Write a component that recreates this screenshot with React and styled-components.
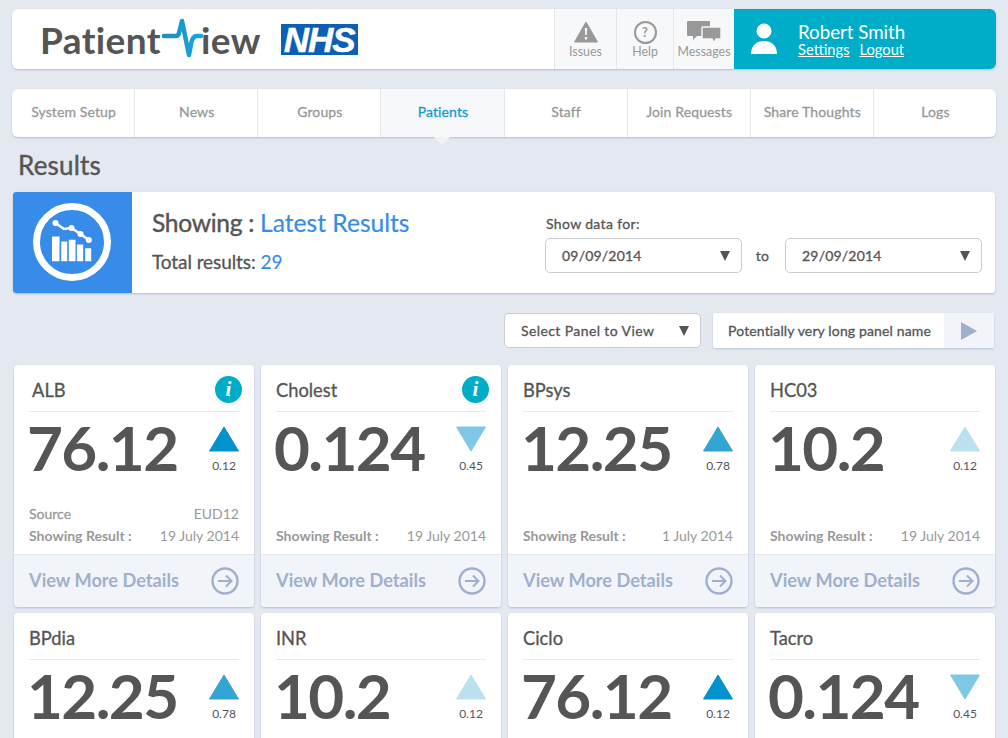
import styled, { createGlobalStyle, css } from "styled-components";

const GlobalStyle = createGlobalStyle`
  html, body {
    margin: 0;
    height: 738px;
    overflow: hidden;
    background: #e4e9f1;
  }
  * { box-sizing: border-box; }
`;

// Lato only comes in regular and bold here, the design uses a medium cut
const medium = css`
  font-weight: 400;
  -webkit-text-stroke: 0.3px currentColor;
`;

const Page = styled.div`
  height: 738px;
  overflow: hidden;
  padding: 9px 12px 0;
  font-family: Lato, "Open Sans", sans-serif;
  color: #555;
`;

const Header = styled.header`
  display: flex;
  height: 60px;
  background: #fff;
  border-radius: 6px;
  box-shadow: 0 1px 2px rgba(120, 140, 170, 0.45);
`;

const Brand = styled.div`
  flex: 1;
  display: flex;
  align-items: center;
  padding-left: 28px;
`;

const Wordmark = styled.div`
  display: flex;
  align-items: center;
  font-size: 37px;
  font-weight: 700;
  letter-spacing: 0.4px;
  color: #555;
`;

const Pulse = styled.svg`
  width: 41px;
  height: 42px;
  margin: 0 -2px 0 1px;
`;

const NhsBadge = styled.div`
  width: 77px;
  height: 31px;
  margin-left: 20px;
  background: #0b5fb4;
  color: #fff;
  font: italic 700 35px/31px "Liberation Sans", sans-serif;
  letter-spacing: -1px;
  -webkit-text-stroke: 0.5px #fff;
  text-align: center;
`;

const IconTab = styled.div`
  width: ${(props) => props.$width}px;
  display: flex;
  flex-direction: column;
  align-items: center;
  justify-content: flex-start;
  padding-top: 11px;
  background: #f7f8f9;
  border-left: 1px solid #e3e6ea;
  font-size: 12.4px;
  line-height: 15px;
  color: #999;
`;

const IconSlot = styled.div`
  height: 24px;
  display: flex;
  align-items: center;
  justify-content: center;
`;

const HelpCircle = styled.div`
  width: 23px;
  height: 23px;
  border: 2px solid #999;
  border-radius: 50%;
  text-align: center;
  font-size: 13px;
  font-weight: 700;
  line-height: 19px;
  color: #999;
`;

const UserBox = styled.div`
  width: 262px;
  display: flex;
  align-items: center;
  padding-left: 17px;
  background: #00adc8;
  border-radius: 0 6px 6px 0;
  color: #fff;
`;

const UserText = styled.div`
  margin-left: 21px;
`;

const UserName = styled.div`
  font-size: 18.7px;
  line-height: 20px;
`;

const UserLinks = styled.div`
  display: flex;
  gap: 10px;
`;

const UserLink = styled.a`
  font-size: 14.7px;
  line-height: 15px;
  text-decoration: underline;
`;

const Nav = styled.nav`
  display: flex;
  height: 48px;
  margin-top: 20px;
  background: #fff;
  border-radius: 6px;
  box-shadow: 0 1px 2px rgba(120, 140, 170, 0.45);
`;

const NavItem = styled.div`
  position: relative;
  flex: 1;
  display: flex;
  align-items: center;
  justify-content: center;
  padding: 0 0 3px 1px;
  border-left: ${(props) => (props.$first ? "none" : "1px solid #e3e6ea")};
  background: ${(props) => (props.$active ? "#f7f8f9" : "transparent")};
  color: ${(props) => (props.$active ? "#0e9bd4" : "#999")};
  font-size: 14px;
  ${medium}
  letter-spacing: 0.12px;

  ${(props) =>
    props.$active &&
    `&::after {
      content: "";
      position: absolute;
      left: 50%;
      bottom: -8px;
      margin-left: -8px;
      border-left: 8px solid transparent;
      border-right: 8px solid transparent;
      border-top: 8px solid #f0f2f6;
    }`}
`;

const PageTitle = styled.h1`
  height: 55px;
  margin: 0;
  padding: 14px 0 0 6px;
  font-size: 26px;
  line-height: 29px;
  ${medium}
  -webkit-text-stroke-width: 0.4px;
  letter-spacing: 0.2px;
  color: #555;
`;

const SummaryPanel = styled.section`
  display: flex;
  height: 101px;
  margin: 0 1px;
  background: #fff;
  border-radius: 3px;
  box-shadow: 0 1px 2px rgba(120, 140, 170, 0.45);
`;

const SummaryIcon = styled.div`
  width: 119px;
  display: flex;
  align-items: center;
  justify-content: center;
  padding: 0 2px 2px 0;
  background: #368ce8;
  border-radius: 3px 0 0 3px;
`;

const SummaryText = styled.div`
  width: 413px;
  padding: 16px 0 0 20px;
`;

const Showing = styled.div`
  font-size: 24.6px;
  line-height: 30px;
  letter-spacing: -0.3px;
  ${medium}
  -webkit-text-stroke-width: 0.4px;
`;

const Accent = styled.span`
  color: #368ce8;
  letter-spacing: 0;
  -webkit-text-stroke-width: ${(props) => (props.$thin ? "0.1px" : "0.2px")};
`;

const TotalLine = styled.div`
  margin-top: 13px;
  font-size: 19px;
  line-height: 22px;
  letter-spacing: -0.08px;
  ${medium}
`;

const DateFilter = styled.div`
  padding-top: 23px;
`;

const FilterLabel = styled.div`
  padding-left: 1px;
  font-size: 14px;
  line-height: 18px;
  ${medium}
  letter-spacing: 0.35px;
`;

const DateRow = styled.div`
  display: flex;
  align-items: center;
  margin-top: 5px;
`;

const To = styled.span`
  width: 43px;
  padding-right: 2px;
  text-align: center;
  font-size: 14px;
  ${medium}
  letter-spacing: 0.3px;
`;

const SelectBox = styled.div`
  width: ${(props) => props.$width}px;
  height: 35px;
  display: flex;
  align-items: center;
  justify-content: space-between;
  padding: 0 11px 0 16px;
  background: #fff;
  border: 1px solid #c9cdd2;
  border-radius: 5px;
  font-size: 14px;
  ${medium}
  letter-spacing: ${(props) => props.$spacing}px;
`;

const Caret = styled.span`
  border-left: 5px solid transparent;
  border-right: 5px solid transparent;
  border-top: 10px solid #555;
`;

const PanelRow = styled.div`
  display: flex;
  justify-content: flex-end;
  height: 35px;
  margin: 20px 2px 0 0;
  gap: 12px;
`;

const PanelName = styled.div`
  width: 281px;
  display: flex;
  background: #fff;
  border-radius: 2px;
  box-shadow: 0 1px 2px rgba(120, 140, 170, 0.4);
`;

const PanelLabel = styled.div`
  flex: 1;
  display: flex;
  align-items: center;
  padding-left: 15px;
  font-size: 14px;
  ${medium}
  letter-spacing: 0.14px;
`;

const PlayButton = styled.div`
  width: 50px;
  display: flex;
  align-items: center;
  justify-content: center;
  background: #f1f4f9;

  &::before {
    content: "";
    border-top: 9px solid transparent;
    border-bottom: 9px solid transparent;
    border-left: 16px solid #9fb0cc;
  }
`;

const CardGrid = styled.div`
  display: grid;
  grid-template-columns: repeat(4, 240px);
  gap: 6px 7px;
  margin: 17px 0 0 2px;
`;

const Card = styled.article`
  height: 242px;
  display: flex;
  flex-direction: column;
  background: #fff;
  border-radius: 4px;
  box-shadow: 0 1px 2px rgba(120, 140, 170, 0.45);
`;

const CardBody = styled.div`
  flex: 1;
  display: flex;
  flex-direction: column;
  padding: 0 15px;
`;

const CardHead = styled.div`
  height: 47px;
  display: flex;
  align-items: center;
  justify-content: space-between;
  padding-top: 4px;
  padding-left: ${(props) => (props.$indent ? 3 : 0)}px;
  border-bottom: 1px solid #e6e9ed;
  font-size: 18.3px;
  ${medium}
  color: #555;
`;

const InfoBadge = styled.span`
  width: 27px;
  height: 27px;
  margin: -1px -3px 0 0;
  border-radius: 50%;
  background: #00adc8;
  color: #fff;
  text-align: center;
  font: italic 700 21px/27px "Liberation Serif", serif;
  -webkit-text-stroke: 0;
`;

const Reading = styled.div`
  display: flex;
  justify-content: space-between;
  margin-top: -2px;
`;

const BigValue = styled.div`
  margin-left: -2px;
  font-size: 62px;
  line-height: 74px;
  font-weight: 700;
  letter-spacing: -1.6px;
  color: #555;
`;

const Trend = styled.div`
  width: 30px;
  padding-top: 16px;
  text-align: center;
  font-size: 12px;
  line-height: 14px;
  color: #555;
`;

const TrendArrow = styled.svg`
  display: block;
  width: 30px;
  height: 26px;
  margin-bottom: 7px;
`;

const MetaList = styled.div`
  margin-top: auto;
  padding-bottom: 7px;
`;

const MetaRow = styled.div`
  display: flex;
  justify-content: space-between;
  font-size: 14px;
  line-height: 22px;
  color: #999;
`;

const MetaLabel = styled.span`
  ${(props) =>
    props.$bold
      ? "font-weight: 700;"
      : "font-weight: 400; -webkit-text-stroke: 0.3px currentColor;"}
`;

const CardFooter = styled.div`
  height: 53px;
  display: flex;
  align-items: center;
  justify-content: space-between;
  padding: 0 15px;
  background: #f1f4f9;
  border-top: 1px solid #e1e6ec;
  border-radius: 0 0 4px 4px;
  color: #9fb0cc;
`;

const FooterLabel = styled.span`
  margin-top: -2px;
  font-size: 18.2px;
  font-weight: 700;
`;

const ArrowIcon = styled.svg`
  display: block;
  width: 28px;
  height: 28px;
`;

const results = [
  { name: "ALB", value: "76.12", delta: "0.12", dir: "up", tone: "#0093cd", source: "EUD12", date: "19 July 2014", info: true, indent: true },
  { name: "Cholest", value: "0.124", delta: "0.45", dir: "down", tone: "#7ec8e6", date: "19 July 2014", info: true },
  { name: "BPsys", value: "12.25", delta: "0.78", dir: "up", tone: "#33a5d2", date: "1 July 2014" },
  { name: "HC03", value: "10.2", delta: "0.12", dir: "up", tone: "#b9e1ee", date: "19 July 2014" },
  { name: "BPdia", value: "12.25", delta: "0.78", dir: "up", tone: "#33a5d2", date: "19 July 2014" },
  { name: "INR", value: "10.2", delta: "0.12", dir: "up", tone: "#b9e1ee", date: "19 July 2014" },
  { name: "Ciclo", value: "76.12", delta: "0.12", dir: "up", tone: "#0093cd", date: "19 July 2014" },
  { name: "Tacro", value: "0.124", delta: "0.45", dir: "down", tone: "#7ec8e6", date: "19 July 2014" },
];

const navItems = ["System Setup", "News", "Groups", "Patients", "Staff", "Join Requests", "Share Thoughts", "Logs"];

const ResultCard = ({ item }) => (
  <Card>
    <CardBody>
      <CardHead $indent={item.indent}>
        {item.name}
        {item.info && <InfoBadge>i</InfoBadge>}
      </CardHead>
      <Reading>
        <BigValue>{item.value}</BigValue>
        <Trend>
          <TrendArrow viewBox="0 0 30 26">
            <path
              d={item.dir === "up" ? "M15 1 L29.5 25 H0.5 Z" : "M0.5 1 H29.5 L15 25 Z"}
              fill={item.tone}
              stroke={item.tone}
              strokeWidth="1"
              strokeLinejoin="round"
            />
          </TrendArrow>
          {item.delta}
        </Trend>
      </Reading>
      <MetaList>
        {item.source && (
          <MetaRow>
            <MetaLabel>Source</MetaLabel>
            <span>{item.source}</span>
          </MetaRow>
        )}
        <MetaRow>
          <MetaLabel $bold>Showing Result :</MetaLabel>
          <span>{item.date}</span>
        </MetaRow>
      </MetaList>
    </CardBody>
    <CardFooter>
      <FooterLabel>View More Details</FooterLabel>
      <ArrowIcon viewBox="0 0 28 28" fill="none" stroke="#9fb0cc">
        <circle cx="14" cy="14" r="12.5" strokeWidth="2.4" />
        <path d="M7 14 H20 M15 8.5 L20.5 14 L15 19.5" strokeWidth="2" />
      </ArrowIcon>
    </CardFooter>
  </Card>
);

export default function App() {
  return (
    <Page>
      <GlobalStyle />
      <Header>
        <Brand>
          <Wordmark>
            Patient
            <Pulse viewBox="0 0 41 42" fill="none">
              <defs>
                <linearGradient id="pulseTone" x1="0" y1="0" x2="1" y2="0">
                  <stop offset="0" stopColor="#1b8fc4" />
                  <stop offset="1" stopColor="#16a6de" />
                </linearGradient>
              </defs>
              <path
                d="M2 18 H14 C17 18 17 15 18 11 L20 3 L27 37 L29 26 C30 20 32 18 35 18 H39"
                stroke="url(#pulseTone)"
                strokeWidth="4.5"
                strokeLinecap="round"
                strokeLinejoin="round"
              />
            </Pulse>
            iew
          </Wordmark>
          <NhsBadge>NHS</NhsBadge>
        </Brand>
        <IconTab $width={62}>
          <IconSlot>
            <svg width="24" height="22" viewBox="0 0 24 22">
              <path d="M12 1 L23.5 21 H0.5 Z" fill="#999" stroke="#999" strokeLinejoin="round" />
              <path d="M10.8 7 H13.2 L12.8 14 H11.2 Z M10.8 16 H13.2 V18.4 H10.8 Z" fill="#f7f8f9" />
            </svg>
          </IconSlot>
          Issues
        </IconTab>
        <IconTab $width={57}>
          <IconSlot>
            <HelpCircle>?</HelpCircle>
          </IconSlot>
          Help
        </IconTab>
        <IconTab $width={61}>
          <IconSlot>
            <svg width="34" height="22" viewBox="0 0 34 22">
              <path d="M1 0 H22 a1 1 0 0 1 1 1 V14 a1 1 0 0 1 -1 1 H10 L6 19 V15 H1 a1 1 0 0 1 -1 -1 V1 a1 1 0 0 1 1 -1 Z" fill="#999" />
              <path d="M16 6 H33 a1 1 0 0 1 1 1 V17 a1 1 0 0 1 -1 1 H29 L27.5 22 L25 18 H16 a1 1 0 0 1 -1 -1 V7 a1 1 0 0 1 1 -1 Z" fill="#999" stroke="#f7f8f9" strokeWidth="1.4" />
            </svg>
          </IconSlot>
          Messages
        </IconTab>
        <UserBox>
          <svg width="26" height="32" viewBox="0 0 26 32" fill="#fff">
            <circle cx="13" cy="8" r="7.5" />
            <path d="M0 31 C0 22 6 18 13 18 C20 18 26 22 26 31 Z" />
          </svg>
          <UserText>
            <UserName>Robert Smith</UserName>
            <UserLinks>
              <UserLink>Settings</UserLink>
              <UserLink>Logout</UserLink>
            </UserLinks>
          </UserText>
        </UserBox>
      </Header>

      <Nav>
        {navItems.map((label, i) => (
          <NavItem key={label} $first={i === 0} $active={label === "Patients"}>
            {label}
          </NavItem>
        ))}
      </Nav>

      <PageTitle>Results</PageTitle>

      <SummaryPanel>
        <SummaryIcon>
          <svg width="80" height="80" viewBox="0 0 80 80">
            <circle cx="40" cy="40" r="35.5" fill="none" stroke="#fff" strokeWidth="7" />
            <path d="M23.5 21 L32 27 L39.5 26 L48.5 32 L56.8 38" fill="none" stroke="#fff" strokeWidth="2.6" />
            <circle cx="23.5" cy="21" r="3" fill="#fff" />
            <circle cx="39.5" cy="26" r="3" fill="#fff" />
            <circle cx="48.5" cy="32" r="3" fill="#fff" />
            <circle cx="56.8" cy="38" r="3" fill="#fff" />
            <path d="M20 34.5 H27.5 V59.2 H20 Z M29.2 39.5 H35.2 V59.2 H29.2 Z M36.8 37.8 H43.5 V59.2 H36.8 Z M44.9 42.5 H51.2 V59.2 H44.9 Z M53.2 46.2 H59.2 V59.2 H53.2 Z" fill="#fff" />
          </svg>
        </SummaryIcon>
        <SummaryText>
          <Showing>
            Showing : <Accent>Latest Results</Accent>
          </Showing>
          <TotalLine>
            Total results: <Accent $thin>29</Accent>
          </TotalLine>
        </SummaryText>
        <DateFilter>
          <FilterLabel>Show data for:</FilterLabel>
          <DateRow>
            <SelectBox $width={197} $spacing={0.2}>
              09/09/2014
              <Caret />
            </SelectBox>
            <To>to</To>
            <SelectBox $width={197} $spacing={0.2}>
              29/09/2014
              <Caret />
            </SelectBox>
          </DateRow>
        </DateFilter>
      </SummaryPanel>

      <PanelRow>
        <SelectBox $width={197} $spacing={0.4}>
          Select Panel to View
          <Caret />
        </SelectBox>
        <PanelName>
          <PanelLabel>Potentially very long panel name</PanelLabel>
          <PlayButton />
        </PanelName>
      </PanelRow>

      <CardGrid>
        {results.map((item) => (
          <ResultCard key={item.name} item={item} />
        ))}
      </CardGrid>
    </Page>
  );
}
